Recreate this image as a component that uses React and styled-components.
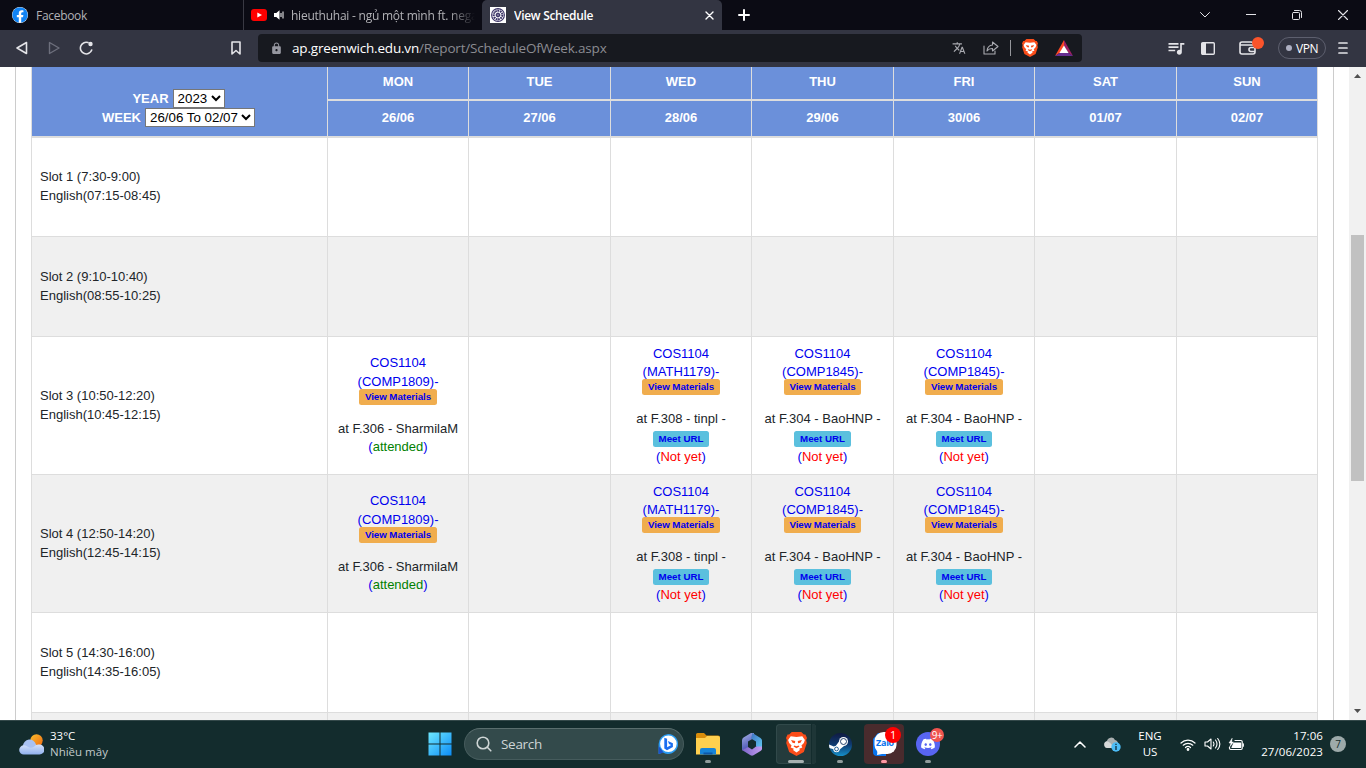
import React from "react";
import styled, { createGlobalStyle, css } from "styled-components";
import { FaFacebook, FaDiscord } from "react-icons/fa";
import { MdTranslate, MdQueueMusic, MdLock } from "react-icons/md";

const GlobalStyle = createGlobalStyle`
  * { box-sizing: border-box; }
  body { margin: 0; overflow: hidden; }
  svg { display: block; flex: none; }
`;

const ui = css`font-family: "Open Sans", "Noto Sans", sans-serif;`;

const Screen = styled.div`
  width: 1366px;
  height: 768px;
  display: flex;
  flex-direction: column;
  overflow: hidden;
  background: #fff;
`;

/* ---------- Browser chrome ---------- */
const TabStrip = styled.div`
  ${ui}
  height: 30px;
  flex: none;
  display: flex;
  background: #0b0b14;
  font-size: 12px;
  color: #b2b2b6;
`;
const Tab = styled.div`
  width: ${(p) => p.$w}px;
  height: 30px;
  display: flex;
  align-items: center;
  padding: 0 ${(p) => p.$end || 7}px 0 ${(p) => p.$pad || 8}px;
  gap: ${(p) => p.$gap || 8}px;
  white-space: nowrap;
  border-right: ${(p) => (p.$divider ? "1px solid #393943" : "0")};
  ${(p) => p.$active && css`
    background: #333542;
    color: #fff;
    font-weight: 600;
    border-radius: 5px 5px 0 0;
    justify-content: space-between;
  `}
`;
const TabTitle = styled.span`
  flex: 1;
  overflow: hidden;
  letter-spacing: ${(p) => p.$ls || 0}px;
  ${(p) => p.$fade && css`mask-image: linear-gradient(90deg, #000 86%, transparent);`}
`;
const FacebookMark = styled(FaFacebook)`
  background: #fff;
  border-radius: 8px;
  color: #1184f5;
`;
const Slot = styled.div`
  position: relative;
  width: ${(p) => p.$w || 32}px;
  flex: none;
  align-self: stretch;
  display: flex;
  align-items: center;
  justify-content: center;
  color: ${(p) => p.$c || "#e4e4e8"};
`;
const Spacer = styled.div`flex: 1;`;

const Toolbar = styled.div`
  ${ui}
  height: 37px;
  flex: none;
  display: flex;
  align-items: center;
  padding: 0 6px 1px;
  background: #333542;
`;
const BookmarkSlot = styled(Slot)`margin-left: 118px;`;
const AddressBar = styled.div`
  width: 824px;
  height: 28px;
  margin-left: 6px;
  padding: 0 1px 0 2px;
  border-radius: 4px;
  background: #17191f;
  display: flex;
  align-items: center;
`;
const Url = styled.span`
  color: #8b8c92;
  font-size: 13.5px;
  letter-spacing: -0.18px;
  white-space: nowrap;
  b { color: #fff; font-weight: 400; }
`;
const Rule = styled.div`width: 1px; height: 16px; background: #96979c;`;
const Vpn = styled.div`
  width: 48px;
  height: 22px;
  border: 1px solid #5d5f6e;
  border-radius: 11px;
  display: flex;
  align-items: center;
  justify-content: center;
  gap: 4px;
  font-size: 12px;
  letter-spacing: -0.4px;
  color: #fff;
  &::before { content: ""; width: 6px; height: 6px; border-radius: 3px; background: #aeb0c2; }
`;
const WalletSlot = styled(Slot)`
  width: 54px;
  padding-right: 6px;
`;
const WalletBadge = styled.div`
  position: absolute;
  right: 14px;
  top: 7px;
  width: 12px;
  height: 12px;
  border-radius: 6px;
  background: #fb542b;
`;

/* ---------- Page ---------- */
const Viewport = styled.div`
  height: 653px;
  flex: none;
  display: flex;
  background: #fff;
  overflow: hidden;
  font: 13px/18.57px "Liberation Sans", Arial, sans-serif;
  color: #212529;
`;
const Panel = styled.div`
  width: 1319px;
  margin: 0 15px;
  padding: 0 15px;
  border: solid #ccc;
  border-width: 0 1px;
`;
const Table = styled.div`
  width: 1287px;
  display: grid;
  grid-template-columns: 296px 141px 142px 141px 142px 141px 142px 141px;
  grid-template-rows: 34px 37px 99px 100px 138px 138px 100px 40px;
  border-left: 1px solid #ddd;
`;
const HeadCell = styled.div`
  background: #6b90da;
  color: #fff;
  font-weight: 700;
  text-align: center;
  padding-top: ${(p) => (p.$date ? 8 : 6)}px;
  border-right: 1px solid #ddd;
  border-bottom: 2px solid #ddd;
`;
const PickerCell = styled(HeadCell)`
  grid-row: 1 / span 2;
  padding: 22px 2px 0 0;
`;
const PickerLine = styled.label`
  display: flex;
  justify-content: center;
  align-items: center;
  gap: 4px;
  height: 19px;
  padding-top: 1px;
`;
const Picker = styled.select`
  font: 13.333px "Liberation Sans", Arial, sans-serif;
  width: ${(p) => p.$w}px;
  height: 19px;
  margin-top: -1px;
  padding: 0;
  color: #000;
  background: #fff;
  border: 1px solid #767676;
  border-radius: 0;
`;
const Cell = styled.div`
  display: flex;
  flex-direction: column;
  justify-content: center;
  align-items: ${(p) => (p.$slot ? "flex-start" : "center")};
  padding: 0 0 0 ${(p) => (p.$slot ? 8 : 0)}px;
  white-space: nowrap;
  background: ${(p) => (p.$alt ? "#f0f0f0" : "#fff")};
  border-right: 1px solid #ddd;
  border-bottom: 1px solid #ddd;
`;
const CourseLink = styled.div`color: #00e; text-align: center;`;
const Tag = styled.span`
  height: 16px;
  padding: 3px ${(p) => (p.$meet ? 6 : 5.5)}px 0;
  border-radius: 2.5px;
  font-size: 9.75px;
  line-height: 10px;
  font-weight: 700;
  letter-spacing: ${(p) => (p.$meet ? 0 : -0.07)}px;
  color: #00e;
  background: ${(p) => (p.$meet ? "#5bc0de" : "#f0ad4e")};
  margin: ${(p) => (p.$meet ? "2px 0 .6px" : "-2.500px 0 15px")};
`;
const Status = styled.div`
  color: #00e;
  span { color: ${(p) => (p.$ok ? "green" : "red")}; }
`;
const Scrollbar = styled.div`
  width: 17px;
  background: #f1f1f1;
  display: flex;
  flex-direction: column;
  align-items: center;
  padding: 7px 0;
`;
const Thumb = styled.div`
  width: 13px;
  height: 246px;
  margin-top: 157px;
  background: #c1c1c1;
`;

/* ---------- Taskbar ---------- */
const Taskbar = styled.div`
  ${ui}
  height: 48px;
  flex: none;
  display: flex;
  align-items: center;
  padding-bottom: 1px;
  background: #132c2d;
  border-top: 1px solid #34494a;
  color: #fff;
  font-size: 11.5px;
  line-height: 16px;
`;
const Weather = styled.div`
  width: 418px;
  padding-left: 19px;
  display: flex;
  align-items: center;
  gap: 6px;
`;
const Muted = styled.div`color: #c1caca;`;
const SearchBox = styled.div`
  width: 220px;
  height: 32px;
  margin: 0 2px;
  padding: 0 5px 0 11px;
  border: 1px solid #455b5c;
  border-top-color: #5a6e6e;
  border-radius: 16px;
  background: #334a4b;
  display: flex;
  align-items: center;
  gap: 9px;
  font-size: 13.5px;
  letter-spacing: -0.3px;
  color: #ced5d5;
  span { flex: 1; }
`;
const TaskButton = styled.div`
  position: relative;
  width: 40px;
  height: 40px;
  margin: 0 2px;
  border-radius: 4px;
  display: flex;
  align-items: center;
  justify-content: center;
  background: ${(p) => p.$bg || "transparent"};
  box-shadow: ${(p) => (p.$ring ? "inset 0 0 0 1px #31494a" : "none")};
`;
const Dash = styled.div`
  position: absolute;
  bottom: 1px;
  left: ${(p) => 20 - (p.$w || 6) / 2}px;
  width: ${(p) => p.$w || 6}px;
  height: 3px;
  border-radius: 2px;
  background: ${(p) => p.$c || "#8f9c9c"};
`;
const StackEdge = styled.div`
  position: absolute;
  right: 0;
  top: 0;
  width: 5px;
  height: 40px;
  border-left: 1px solid #132c2d;
  border-radius: 0 4px 4px 0;
  background: #1e3637;
`;
const Badge = styled.div`
  position: absolute;
  left: ${(p) => p.$x}px;
  top: ${(p) => p.$y}px;
  width: ${(p) => p.$s}px;
  height: ${(p) => p.$s}px;
  border-radius: 50%;
  background: ${(p) => p.$c};
  font-size: ${(p) => p.$f}px;
  line-height: ${(p) => p.$s}px;
  text-align: center;
  letter-spacing: -0.4px;
`;
const Language = styled.div`width: 44px; text-align: center; margin: 0 4px 0 0;`;
const Clock = styled.div`width: 75px; text-align: right; white-space: nowrap; letter-spacing: 0.08px;`;
const Count = styled.div`
  width: 16px;
  height: 16px;
  border-radius: 8px;
  margin: 0 20px 0 7px;
  background: #9daaaa;
  color: #132c2d;
  text-align: center;
  font-size: 10px;
  line-height: 16px;
`;

/* ---------- Drawings ---------- */
const Stroke = ({ w = 16, h = 16, sw = 1.5, children }) => (
  <svg width={w} height={h} viewBox={`0 0 ${w} ${h}`} fill="none" stroke="currentColor" strokeWidth={sw} strokeLinecap="round" strokeLinejoin="round">{children}</svg>
);
const Lion = ({ w, h }) => (
  <svg width={w} height={h} viewBox="0 0 20 24" preserveAspectRatio="none">
    <path d="M5.500 0h9L17 2.500h1.500L20 6l-.8 2 .6 3-2.800 9-7 4-7-4-2.800-9 .6-3L0 6l1.500-3.500H3z" fill="#fb4d1a" />
    <path d="M4.500 4.300 10 5l5.500-.7L18 8l-1 3-2.300 2.500.8 2-3 1.200.8 1.300L10 20.500 6.700 18l.8-1.300-3-1.200.8-2L3 11 2 8z" fill="#fff" />
    <path d="m4.800 8 4 1-.3 2.300-2.300-.6zM15.200 8l-4 1 .3 2.300 2.300-.6zM8 13.500l2 .8 2-.8.8 1-2.800 1.800-2.800-1.800z" fill="#fb4d1a" />
  </svg>
);
const YouTube = () => (
  <svg width="16" height="12" viewBox="0 0 16 12"><rect width="16" height="12" rx="3" fill="#f00" /><path d="M6.300 3.400v5.200L11 6z" fill="#fff" /></svg>
);
const Speaker = () => (
  <svg width="10" height="10" viewBox="0 0 10 10"><path d="M0 3h2.300L5.500.3v9.400L2.300 7H0z" fill="#fff" /><path d="M7 3v4M9 1.500v7" stroke="#fff" strokeWidth="1" /></svg>
);
const Crest = () => (
  <svg width="16" height="16" viewBox="0 0 16 16" fill="none" stroke="#3c3468">
    <rect width="16" height="16" fill="#fff" stroke="none" />
    <circle cx="8" cy="8" r="6.400" strokeWidth="1.100" />
    <circle cx="8" cy="8" r="4.300" strokeWidth="1.800" strokeDasharray="1.700 .7" />
    <circle cx="8" cy="8" r="1.700" strokeWidth="1" />
    <path d="M8 2v12M2 8h12M4 4l8 8M12 4l-8 8" strokeWidth=".5" />
  </svg>
);
const Rewards = () => (
  <svg width="18" height="16" viewBox="0 0 18 16">
    <path d="M9 0 0 16l9-6z" fill="#ff4724" /><path d="M9 0v6l4.600 7L18 16z" fill="#9e1f63" /><path d="M0 16h18l-4.500-3h-9z" fill="#662d91" />
    <path d="M9 5.500 4.400 13h9.200z" fill="#fff" />
  </svg>
);
const CloudSun = () => (
  <svg width="25" height="21" viewBox="0 0 25 21">
    <defs>
      <linearGradient id="sun" x1="0" y1="0" x2="1" y2="1"><stop stopColor="#f8bd2c" /><stop offset="1" stopColor="#f06a12" /></linearGradient>
      <linearGradient id="cloud" x1="0" y1="0" x2="0" y2="1"><stop stopColor="#d5e2fb" /><stop offset="1" stopColor="#8fb0ee" /></linearGradient>
    </defs>
    <circle cx="17.500" cy="6.500" r="6.200" fill="url(#sun)" />
    <path d="M4 12a6.600 6.600 0 0 1 13-1.500l3 8H5z" fill="#a9c2f3" />
    <path d="M4.800 20.500a4.600 4.600 0 0 1 0-9.200q2.500 0 4 1.500 3 1.800 6.200 0 2.500-3 5.500-2.200a4.900 4.900 0 0 1 0 9.900z" fill="url(#cloud)" />
  </svg>
);
const Windows = () => (
  <svg width="24" height="24" viewBox="0 0 24 24">
    <defs><linearGradient id="win" x1="0" y1="0" x2="1" y2="1"><stop stopColor="#6ee8ff" /><stop offset="1" stopColor="#0c8cf6" /></linearGradient></defs>
    <path d="M.5.5h11v11H.5zM12.500.5h11v11h-11zM.5 12.500h11v11H.5zM12.500 12.500h11v11h-11z" fill="url(#win)" />
  </svg>
);
const Bing = () => (
  <svg width="20" height="20" viewBox="0 0 20 20">
    <path d="M10 0a10 10 0 1 1-5 18.600L.6 20V10A10 10 0 0 1 10 0z" fill="#2b9cf2" />
    <path d="M.6 20V12l5 6.500z" fill="#1c50c8" />
    <circle cx="10.400" cy="9.800" r="8.300" fill="#fff" />
    <path d="m6.300 3.800 2.800 1v8.400l4-2.100-2.100-1.100-1.100-3 5 2.300v3.600L9 16.300l-2.700-1.700z" fill="#1b6ef0" />
  </svg>
);
const Folder = () => (
  <svg width="24" height="22" viewBox="0 0 24 22">
    <path d="M0 1.500Q0 0 1.500 0H8l2.500 2.500H22q2 0 2 2V9H0z" fill="#d98d0b" />
    <path d="M0 5h9l2-2h11q2 0 2 2v16.500H0z" fill="#ffd04f" />
    <path d="M4 21.500V17q0-2 2-2h12q2 0 2 2v4.500z" fill="#1784d8" /><path d="M7.500 21.500v-2h9v2z" fill="#0d57a8" />
  </svg>
);
const Office = () => (
  <svg width="20" height="23" viewBox="0 0 20 23">
    <defs>
      <linearGradient id="offA" x1="0" y1="0" x2=".4" y2="1"><stop stopColor="#a9b4e6" /><stop offset="1" stopColor="#4750b4" /></linearGradient>
      <linearGradient id="offB" x1="0" y1="0" x2="1" y2="1"><stop stopColor="#3d6fc0" /><stop offset="1" stopColor="#62cdf4" /></linearGradient>
      <linearGradient id="offC" x1="0" y1="0" x2="1" y2="0"><stop stopColor="#7a63c8" /><stop offset="1" stopColor="#c39df0" /></linearGradient>
    </defs>
    <path d="M12 0H9L1.500 4.500Q0 5.500 0 7.500v10l6-3V8.500l6-3.500z" fill="url(#offA)" />
    <path d="M10.500 0 18.500 5Q20 6 20 7.500v9l-6-3V8.500L9 5.500z" fill="url(#offB)" />
    <path d="m0 17 8.500 5.300q1.500.8 3 0l7-4.300q1.500-.9 1.500-2.500V13.500h-6L10 16.500l-4-2.500z" fill="url(#offC)" />
  </svg>
);
const SteamIcon = () => (
  <svg width="23" height="23" viewBox="0 0 23 23">
    <defs>
      <linearGradient id="steam" x1="0" y1="0" x2="0" y2="1"><stop stopColor="#101a42" /><stop offset=".5" stopColor="#0f3a70" /><stop offset="1" stopColor="#1590ca" /></linearGradient>
      <clipPath id="steamDisc"><circle cx="11.500" cy="11.500" r="11.500" /></clipPath>
    </defs>
    <circle cx="11.500" cy="11.500" r="11.500" fill="url(#steam)" />
    <g clipPath="url(#steamDisc)">
      <path d="M0 11.500 6 14l4-5.500 5 4.500-5.500 4.500L0 15z" fill="#fff" />
      <circle cx="7.500" cy="16" r="3.200" fill="#fff" />
      <circle cx="7.500" cy="16" r="1.900" fill="none" stroke="#14548c" strokeWidth=".9" />
    </g>
    <circle cx="14.500" cy="8.500" r="4.500" fill="#fff" />
    <circle cx="14.500" cy="8.500" r="3" fill="#fff" stroke="#12305f" strokeWidth=".9" />
  </svg>
);
const Zalo = () => (
  <svg width="25" height="24" viewBox="0 0 25 24">
    <path d="M6 1h8v23H5q-4 0-4-4V7z" fill="#0874ee" />
    <rect x="2.500" y="0" width="22" height="22" rx="9" fill="#fff" /><path d="M6 14l-1 9 10-2z" fill="#fff" />
    <text x="13" y="14" textAnchor="middle" fontFamily="Open Sans" fontWeight="700" fontSize="9" letterSpacing="-.3" fill="#0874ee">Zalo</text>
  </svg>
);
const Discord = () => (
  <svg width="24" height="24" viewBox="0 0 24 24"><circle cx="12" cy="12" r="12" fill="#5865f2" /><FaDiscord x="4.500" y="4.500" size={15} color="#fff" /></svg>
);
const OneDrive = () => (
  <svg width="17" height="15" viewBox="0 0 17 15">
    <path d="M3.500 11a3.400 3.400 0 0 1-.6-6.700A4.300 4.300 0 0 1 11 3a4 4 0 0 1 3 4v4z" fill="#a9afb0" /><path d="M3.500 11a3.400 3.400 0 0 1-.6-6.700Q6 4.500 10 11z" fill="#d6d9d9" />
    <circle cx="12" cy="10" r="4.700" fill="#4cbcf5" /><path d="M12 9v4M12 6.800v1.200" stroke="#102c3a" strokeWidth="1.300" />
  </svg>
);

/* ---------- Data ---------- */
const days = [["MON", "26/06"], ["TUE", "27/06"], ["WED", "28/06"], ["THU", "29/06"], ["FRI", "30/06"], ["SAT", "01/07"], ["SUN", "02/07"]];
const classes = {
  0: { code: "COMP1809", where: "at F.306 - SharmilaM", attended: true },
  2: { code: "MATH1179", where: "at F.308 - tinpl -" },
  3: { code: "COMP1845", where: "at F.304 - BaoHNP -" },
  4: { code: "COMP1845", where: "at F.304 - BaoHNP -" },
};
const slots = [
  { name: "Slot 1 (7:30-9:00)", english: "English(07:15-08:45)" },
  { name: "Slot 2 (9:10-10:40)", english: "English(08:55-10:25)" },
  { name: "Slot 3 (10:50-12:20)", english: "English(10:45-12:15)", classes },
  { name: "Slot 4 (12:50-14:20)", english: "English(12:45-14:15)", classes },
  { name: "Slot 5 (14:30-16:00)", english: "English(14:35-16:05)" },
  {},
];

const Lesson = ({ item }) => (
  <>
    <CourseLink>COS1104<br />({item.code})-</CourseLink>
    <Tag>View Materials</Tag>
    <div>{item.where}</div>
    {!item.attended && <Tag $meet>Meet URL</Tag>}
    <Status $ok={item.attended}>(<span>{item.attended ? "attended" : "Not yet"}</span>)</Status>
  </>
);

const Browser = () => (
  <>
    <TabStrip>
      <Tab $w={244} $pad={12} $divider>
        <FacebookMark size={16} />
        <TabTitle $ls={-0.3}>Facebook</TabTitle>
      </Tab>
      <Tab $w={238} $pad={7} $gap={7}>
        <YouTube /><Speaker />
        <TabTitle $fade $ls={-0.24}>hieuthuhai - ngủ một mình ft. negav</TabTitle>
      </Tab>
      <Tab $w={240} $end={8} $active>
        <Crest /><TabTitle $ls={-0.3}>View Schedule</TabTitle>
        <Stroke w={9} h={9} sw={1.4}><path d="m1 1 7 7M8 1 1 8" /></Stroke>
      </Tab>
      <Slot $w={44} $c="#fff"><Stroke w={12} h={12} sw={2}><path d="M6 1v10M1 6h10" /></Stroke></Slot>
      <Spacer />
      <Slot $w={46}><Stroke w={10} h={6} sw={1}><path d="m.5.5 4.500 4.500L9.500.5" /></Stroke></Slot>
      <Slot $w={46}><Stroke w={10} h={2} sw={1}><path d="M0 .5h10" /></Stroke></Slot>
      <Slot $w={46}><Stroke w={10} h={10} sw={1}><rect x=".5" y="2.500" width="7" height="7" rx="1" /><path d="M2.500.5h5q2 0 2 2v5" /></Stroke></Slot>
      <Slot $w={46}><Stroke w={10} h={10} sw={1.1}><path d="m.5.5 9 9M9.500.5l-9 9" /></Stroke></Slot>
    </TabStrip>
    <Toolbar>
      <Slot><Stroke w={12} h={14} sw={1.6}><path d="M10.500 1.500v11L1 7z" /></Stroke></Slot>
      <Slot $c="#6d6f7c"><Stroke w={12} h={14} sw={1.4}><path d="M1.500 1.500v11L11 7z" /></Stroke></Slot>
      <Slot><Stroke w={14} h={14} sw={1.6}><path d="M9 1.600A5.800 5.800 0 1 0 12.700 9" /><circle cx="11.500" cy="3" r="1.400" fill="currentColor" /></Stroke></Slot>
      <BookmarkSlot><Stroke w={10} h={14} sw={1.6}><path d="M1 1h8v12L5 9.500 1 13z" /></Stroke></BookmarkSlot>
      <AddressBar>
        <Slot $c="#9697a0"><MdLock size={13} /></Slot>
        <Url><b>ap.greenwich.edu.vn</b>/Report/ScheduleOfWeek.aspx</Url>
        <Spacer />
        <Slot $c="#a9aab0"><MdTranslate size={14} /></Slot>
        <Slot $c="#a9aab0"><Stroke w={16} h={14} sw={1.1}><path d="M1 5v8h11v-3M9.500 1l5.500 4.500-5.500 4.500V7.500Q6 7.300 4 10q.5-5.500 5.500-6z" /></Stroke></Slot>
        <Slot $w={6}><Rule /></Slot>
        <Slot $w={34}><Lion w={16} h={18} /></Slot>
        <Slot $w={34}><Rewards /></Slot>
      </AddressBar>
      <Spacer />
      <Slot><MdQueueMusic size={20} /></Slot>
      <Slot><svg width="14" height="13" viewBox="0 0 14 13"><rect x=".7" y=".7" width="12.600" height="11.600" rx="1" fill="none" stroke="currentColor" strokeWidth="1.400" /><path d="M1 1h4v11H1z" fill="currentColor" /></svg></Slot>
      <WalletSlot>
        <Stroke w={18} h={14} sw={1.6}><path d="M14 4V3q0-2-2-2H3Q1 1 1 3v8q0 2 2 2h11q2 0 2-2V6q0-2-2-2H1M16 6.500h-4a2 2 0 0 0 0 4h4" /></Stroke>
        <WalletBadge />
      </WalletSlot>
      <Vpn>VPN</Vpn>
      <Slot $w={34}><Stroke w={10} h={12} sw={1.7}><path d="M1 1h8M1 6h8M1 11h8" /></Stroke></Slot>
    </Toolbar>
  </>
);

const Schedule = () => (
  <Viewport>
    <Panel>
      <Table>
        <PickerCell>
          <PickerLine>YEAR<Picker $w={52}><option>2023</option></Picker></PickerLine>
          <PickerLine>WEEK<Picker $w={110}><option>26/06 To 02/07</option></Picker></PickerLine>
        </PickerCell>
        {days.map(([d]) => <HeadCell key={d}>{d}</HeadCell>)}
        {days.map(([, date]) => <HeadCell $date key={date}>{date}</HeadCell>)}
        {slots.map((s, r) => (
          <React.Fragment key={r}>
            <Cell $slot $alt={r % 2 === 1}><div>{s.name}</div><div>{s.english}</div></Cell>
            {days.map(([d], c) => (
              <Cell key={d} $alt={r % 2 === 1}>{s.classes?.[c] && <Lesson item={s.classes[c]} />}</Cell>
            ))}
          </React.Fragment>
        ))}
      </Table>
    </Panel>
    <Scrollbar>
      <svg width="7" height="4" viewBox="0 0 7 4"><path d="M0 4 3.500 0 7 4z" fill="#505050" /></svg>
      <Thumb />
      <Spacer />
      <svg width="7" height="4" viewBox="0 0 7 4"><path d="m0 0 3.500 4L7 0z" fill="#505050" /></svg>
    </Scrollbar>
  </Viewport>
);

const SystemBar = () => (
  <Taskbar>
    <Weather><CloudSun /><div><div>33°C</div><Muted>Nhiều mây</Muted></div></Weather>
    <TaskButton><Windows /></TaskButton>
    <SearchBox>
      <Stroke w={16} h={16} sw={1.6}><circle cx="7" cy="7" r="5.800" /><path d="m11.300 11.300 3.500 3.500" /></Stroke>
      <span>Search</span><Bing />
    </SearchBox>
    <TaskButton><Folder /><Dash /></TaskButton>
    <TaskButton><Office /></TaskButton>
    <TaskButton $bg="#243b3c" $ring><StackEdge /><Lion w={21} h={24} /><Dash $w={16} $c="#a7b1b1" /></TaskButton>
    <TaskButton><SteamIcon /><Dash /></TaskButton>
    <TaskButton $bg="#492b2d"><Zalo /><Dash $c="#ff99a4" /><Badge $x={21} $y={3} $s={16} $c="#f00" $f={11}>1</Badge></TaskButton>
    <TaskButton><Discord /><Dash /><Badge $x={22} $y={4} $s={14} $c="#f0544f" $f={10}>9+</Badge></TaskButton>
    <Spacer />
    <Slot $c="#fff"><Stroke w={12} h={7} sw={1.5}><path d="m1 6 5-5 5 5" /></Stroke></Slot>
    <Slot><OneDrive /></Slot>
    <Language>ENG<br />US</Language>
    <Slot $w={24} $c="#fff"><Stroke w={16} h={13} sw={1.2}><path d="M1 5a10 10 0 0 1 14 0M3.200 7.200a7 7 0 0 1 9.600 0M5.500 9.500a3.800 3.800 0 0 1 5 0" /><circle cx="8" cy="11.500" r=".8" fill="currentColor" /></Stroke></Slot>
    <Slot $w={24} $c="#fff"><Stroke w={17} h={14} sw={1.1}><path d="M1 5h2.500L7 2v10L3.500 9H1zM9.300 5q1.300 2 0 4M11.500 3q3 4 0 8M13.700 1.500q4.300 5.500 0 11" /></Stroke></Slot>
    <Slot $w={24} $c="#fff"><Stroke w={16} h={13} sw={1.2}><path d="M7 2.500h6q1.200 0 1.200 1.200v6.600q0 1.200-1.200 1.200H2.700q-1.200 0-1.200-1.200V9" /><path d="M6 5h6.500v4.500H4zM15.300 5.800v2.400" fill="currentColor" /><path d="M4 .5 1 5h2l-1 3.500L5.500 4H3.800z" fill="currentColor" strokeWidth=".5" /></Stroke></Slot>
    <Clock>17:06<br />27/06/2023</Clock>
    <Count>7</Count>
  </Taskbar>
);

export default function App() {
  return (
    <Screen>
      <GlobalStyle />
      <Browser />
      <Schedule />
      <SystemBar />
    </Screen>
  );
}
